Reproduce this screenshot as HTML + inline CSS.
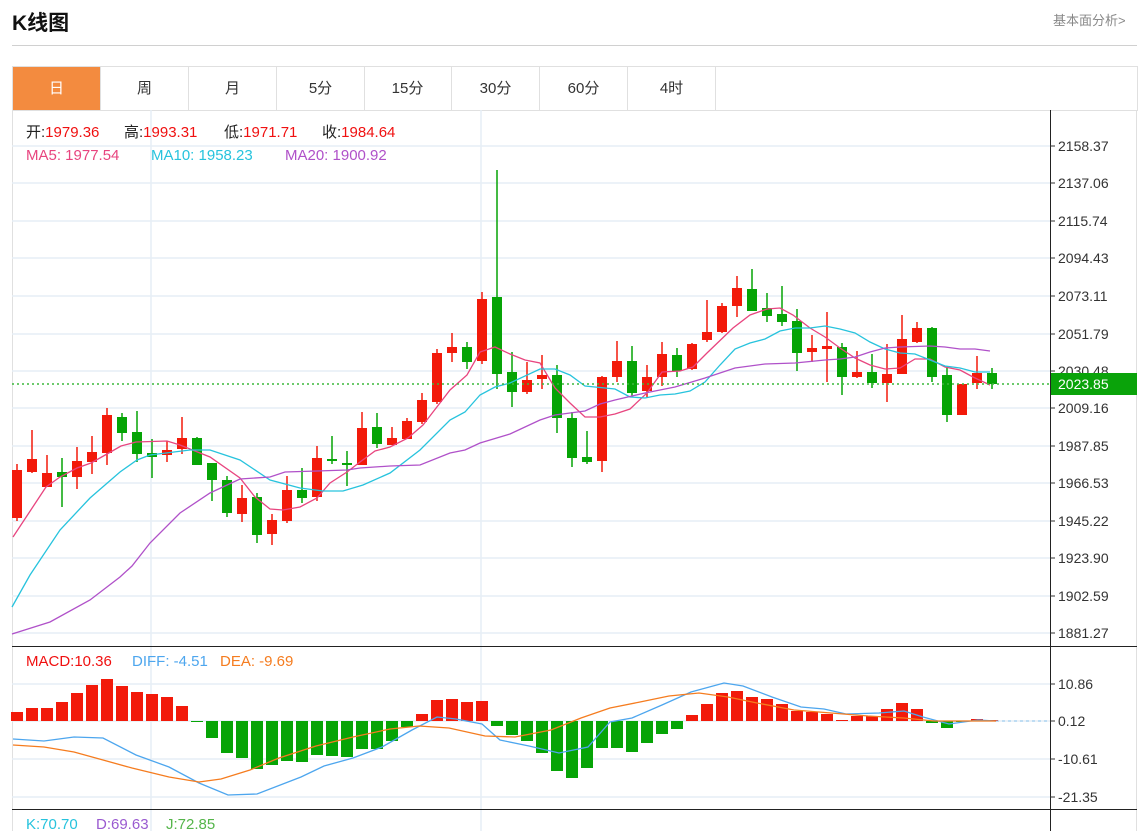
<!DOCTYPE html>
<html><head><meta charset="utf-8">
<style>
body{margin:0;background:#fff;width:1147px;height:831px;overflow:hidden;font-family:"Liberation Sans","Noto Sans CJK SC",sans-serif;}
.t{position:absolute;left:12px;top:7px;font-size:21px;font-weight:bold;color:#111;}
.r{position:absolute;left:1053px;top:10px;font-size:13px;color:#888;}
.hr{position:absolute;left:12px;top:45px;width:1125px;height:1px;background:#d0d0d0;}
.tabs{position:absolute;left:12px;top:66px;width:1124px;height:43px;border:1px solid #e0e0e0;}
.tab{position:absolute;top:0;height:43px;width:87px;border-right:1px solid #e0e0e0;text-align:center;line-height:43px;font-size:15px;color:#333;}
.on{background:#f38b3f;color:#fff;}
svg{position:absolute;left:0;top:0;}
</style></head><body>
<div class="t">K线图</div>
<div class="r">基本面分析&gt;</div>
<div class="hr"></div>
<div class="tabs">
<div class="tab on" style="left:0">日</div>
<div class="tab" style="left:88px">周</div>
<div class="tab" style="left:176px">月</div>
<div class="tab" style="left:264px">5分</div>
<div class="tab" style="left:351px">15分</div>
<div class="tab" style="left:439px">30分</div>
<div class="tab" style="left:527px">60分</div>
<div class="tab" style="left:615px">4时</div>
</div>
<svg id="s" width="1147" height="831" xmlns="http://www.w3.org/2000/svg" font-family="Liberation Sans, Noto Sans CJK SC, sans-serif">
<line x1="12.5" y1="110" x2="12.5" y2="831" stroke="#e0e0e0"/>
<line x1="1136.5" y1="110" x2="1136.5" y2="831" stroke="#e0e0e0"/>
<g id="grid" stroke="#e6eef5" stroke-width="1.5"></g>
<line x1="151" y1="110" x2="151" y2="831" stroke="#e6eef5" stroke-width="1.5"/>
<line x1="481" y1="110" x2="481" y2="831" stroke="#e6eef5" stroke-width="1.5"/>
<line x1="1050.5" y1="110" x2="1050.5" y2="831" stroke="#222"/>
<line x1="12" y1="646.5" x2="1137" y2="646.5" stroke="#222"/>
<line x1="12" y1="809.5" x2="1137" y2="809.5" stroke="#222"/>
<g id="labels" font-size="14" fill="#333"></g>
<g id="candles"></g>
<g id="mas" fill="none" stroke-width="1.3"></g>
<line x1="12" y1="384" x2="1050" y2="384" stroke="#3cb83c" stroke-dasharray="2,3" stroke-width="1.5"/>
<rect x="1051" y="373" width="86" height="22" fill="#0aa30a"/>
<text x="1058" y="389" font-size="14" fill="#fff">2023.85</text>
<g id="macd"></g>
<line x1="996" y1="721" x2="1050" y2="721" stroke="#8cc4ec" stroke-dasharray="3,3"/>
<g font-size="15">
<text x="26" y="137" fill="#222">开:<tspan fill="#f01010">1979.36</tspan></text>
<text x="124" y="137" fill="#222">高:<tspan fill="#f01010">1993.31</tspan></text>
<text x="224" y="137" fill="#222">低:<tspan fill="#f01010">1971.71</tspan></text>
<text x="322" y="137" fill="#222">收:<tspan fill="#f01010">1984.64</tspan></text>
<text x="26" y="160" fill="#e8457f">MA5:  1977.54</text>
<text x="151" y="160" fill="#27c3dd">MA10:  1958.23</text>
<text x="285" y="160" fill="#b051c9">MA20:  1900.92</text>
<text x="26" y="666" fill="#f01010">MACD:10.36</text>
<text x="132" y="666" fill="#4da6ee">DIFF: -4.51</text>
<text x="220" y="666" fill="#f57c1f">DEA: -9.69</text>
<text x="26" y="829" fill="#27c3dd">K:70.70</text>
<text x="96" y="829" fill="#9a5ad0">D:69.63</text>
<text x="166" y="829" fill="#55b54a">J:72.85</text>
</g>
</svg>
<script>
var NS="http://www.w3.org/2000/svg";
function el(p,t,a){var e=document.createElementNS(NS,t);for(var k in a)e.setAttribute(k,a[k]);document.getElementById(p).appendChild(e);return e;}
var lv=[[146,"2158.37"],[183,"2137.06"],[221,"2115.74"],[258,"2094.43"],[296,"2073.11"],[334,"2051.79"],[371,"2030.48"],[408,"2009.16"],[446,"1987.85"],[483,"1966.53"],[521,"1945.22"],[558,"1923.90"],[596,"1902.59"],[633,"1881.27"],[684,"10.86"],[721,"0.12"],[759,"-10.61"],[797,"-21.35"]];
lv.forEach(function(l){el("grid","line",{x1:12,y1:l[0],x2:1050,y2:l[0]});el("labels","line",{x1:1050,y1:l[0],x2:1055,y2:l[0],stroke:"#333"});var t=el("labels","text",{x:1058,y:l[0]+5});t.textContent=l[1];});
var C=[
["r",470,518,464,521],["r",459,472,430,473],["r",473,487,455,487],["g",472,477,458,507],["r",461,477,447,489],["r",452,462,436,474],["r",415,453,408,465],["g",417,433,413,441],["g",432,454,411,462],["g",453,457,439,478],
["r",450,455,441,462],["r",438,449,417,454],["g",438,465,437,465],["g",463,480,463,501],["g",480,513,476,517],["r",498,514,485,522],["g",497,535,493,543],["r",520,534,514,545],["r",490,521,476,523],["g",490,498,468,503],
["r",458,497,446,501],["g",459,461,436,464],["g",463,465,451,486],["r",428,465,412,465],["g",427,444,413,448],["r",438,445,427,445],["r",421,439,418,439],["r",400,422,393,424],["r",353,402,349,404],["r",347,353,333,362],
["g",347,362,342,369],["r",299,361,292,364],["g",297,374,170,389],["g",372,392,352,407],["r",380,392,362,394],["r",375,379,355,389],["g",375,418,365,433],["g",418,458,412,467],["g",457,462,431,464],["r",377,461,376,472],
["r",361,377,341,382],["g",361,393,346,397],["r",377,391,365,397],["r",354,377,342,386],["g",355,371,348,377],["r",344,369,343,370],["r",332,340,300,342],["r",306,332,303,333],["r",288,306,276,317],["g",289,311,269,311],
["g",308,316,293,322],["g",314,322,286,326],["g",321,353,309,371],["r",348,352,335,362],["r",346,349,312,382],["g",347,377,343,395],["r",372,377,351,378],["g",372,383,354,388],["r",374,383,344,402],["r",339,374,315,374],
["r",328,342,322,343],["g",328,377,327,382],["g",375,415,367,422],["r",384,415,384,415],["r",373,383,356,389],["g",373,384,368,389]];
C.forEach(function(c,i){var x=17+15*i,col=c[0]=="r"?"#f21a0a":"#06a406";
el("candles","line",{x1:x,y1:c[3],x2:x,y2:c[4],stroke:col,"stroke-width":1.5});
el("candles","rect",{x:x-5,y:c[1],width:10,height:Math.max(c[2]-c[1],2),fill:col});});
function pl(p,col,pts){el(p,"polyline",{points:pts,stroke:col,fill:"none","stroke-width":1.3});}
pl("mas","#e8457f","13,537 46,487 60,477 77,468 91,463 107,454 121,446 136,442 167,441 180,445 210,457 240,478 255,497 270,509 283,510 300,507 317,498 330,483 347,472 360,462 375,451 390,447 408,438 423,425 433,412 450,390 467,375 480,352 495,347 510,354 525,360 540,363 555,388 570,403 585,417 600,417 615,414 630,409 647,393 662,372 680,371 693,367 707,353 733,328 750,315 767,309 780,308 793,315 810,328 825,337 840,348 855,358 870,365 885,369 900,368 915,359 930,359 945,367 960,370 973,377 990,385");
pl("mas","#27c3dd","12,607 30,575 60,530 90,498 120,472 137,460 150,455 190,450 210,450 240,460 270,480 300,488 323,491 343,491 363,485 390,473 420,450 450,420 465,412 480,395 495,387 510,383 540,369 555,369 570,375 585,386 615,389 630,397 645,398 660,395 675,394 690,391 705,382 720,365 735,349 750,343 765,339 780,331 795,328 810,328 825,326 840,329 855,333 870,342 885,349 900,353 915,354 930,360 945,366 960,368 975,372 990,372");
pl("mas","#b051c9","12,634 50,622 90,600 120,577 132,566 150,543 180,513 210,493 240,479 270,477 285,472 317,471 347,470 360,468 390,466 420,465 450,453 465,450 480,443 510,434 540,420 555,415 585,411 600,404 615,400 645,393 675,387 705,378 735,368 765,364 795,363 825,360 840,359 855,357 870,352 885,348 900,347 930,346 945,347 960,349 975,349 990,351");
var M=[712,708,708,702,693,685,679,686,692,694,697,706,722,738,753,758,769,765,761,762,755,756,757,749,749,741,727,714,700,699,702,701,726,735,741,753,771,778,768,748,748,752,743,734,729,715,704,693,691,697,699,704,711,712,714,720,716,716,709,703,709,723,728,721,719,720];
M.forEach(function(y,i){var x=17+15*i,col=y<721?"#f21a0a":"#06a406";var t=Math.min(y,721),h=Math.max(Math.abs(y-721),1);el("macd","rect",{x:x-6,y:t,width:12,height:h,fill:col});});
pl("macd","#4da6ee","13,739 44,741 74,737 103,738 136,755 169,767 199,783 228,795 257,794 301,777 324,766 353,758 382,747 412,730 437,717 456,719 482,724 500,740 529,746 559,753 588,747 610,722 632,718 662,705 691,692 724,683 743,686 772,697 801,707 824,709 846,714 879,713 904,711 923,717 949,724 978,720 996,721");
pl("macd","#f57c1f","13,745 44,747 74,752 103,760 132,768 169,777 199,782 221,779 250,770 279,758 316,746 353,737 390,729 419,726 449,728 485,736 515,737 551,730 581,718 610,708 640,702 669,696 699,693 728,697 757,703 794,710 831,713 868,716 904,718 934,721 996,721");
</script>
</body></html>
